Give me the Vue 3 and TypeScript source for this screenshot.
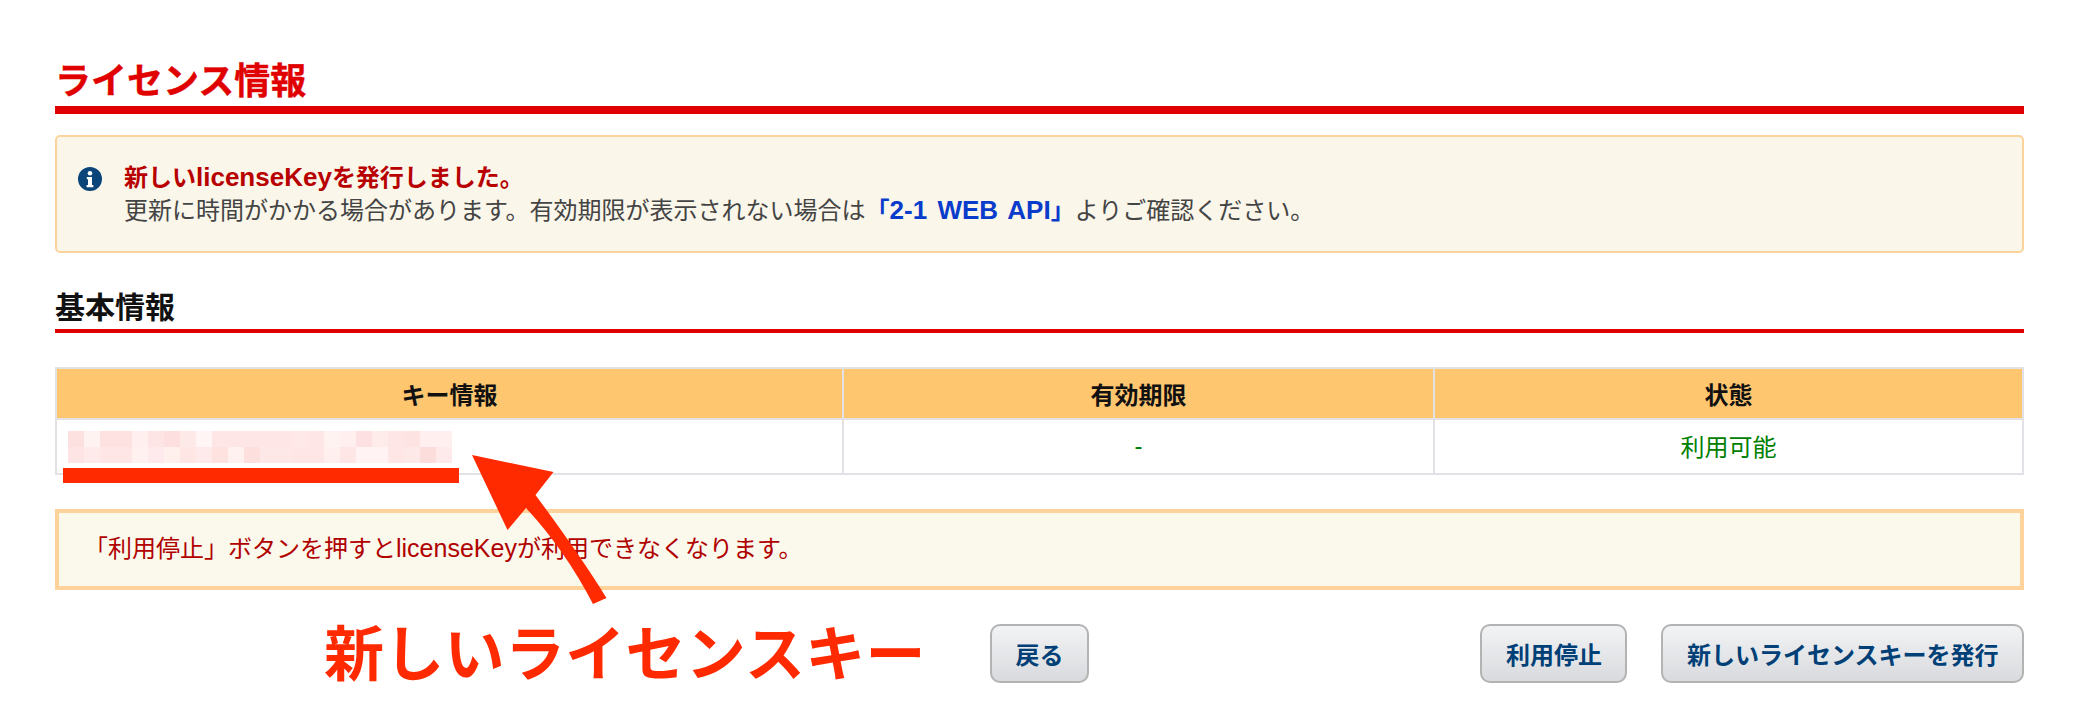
<script setup lang="ts">
const rows: string[][] = [
  ['fde0e0','fff3f1','fee2e2','fee2e2','fff0ef','fde5e5','fddfe0','fee9e9','fff5f4','fee6e6','fee6e6','fee6e6','fee6e6','fee6e6','fee8e8','fee6e6','fff3f1','ffefee','fde0e1','feecea','fee6e6','fee3e3','fff0ef','fff0ef'],
  ['fee4e4','feeaea','fee6e6','fee6e6','fff1f0','feeaec','fff0ee','fee6e5','feeaea','fee2e0','fff1ef','fddfdd','fee7e7','fee7e7','fee6e6','fee6e6','ffefee','fee6e6','fff4f3','fff4f3','fee6e6','fee9e9','fddcdc','feeaea'],
]
const cells = rows.flat().map((c) => '#' + c)
</script>

<template>
  <div class="page">
    <h1 class="title">ライセンス情報</h1>

    <div class="notice">
      <svg class="info" viewBox="0 0 24 24" aria-hidden="true">
        <circle cx="12" cy="12" r="12" fill="#0a4478" />
        <circle cx="12" cy="6.2" r="2.3" fill="#fff" />
        <path d="M8.8 10h5.2v8h1.4v2.2H8.6V18H10v-5.8H8.8z" fill="#fff" />
      </svg>
      <div class="notice-text">
        <div class="notice-head">新しい<span class="latin-bold">licenseKey</span>を発行しました。</div>
        <div>更新に時間がかかる場合があります。有効期限が表示されない場合は<a class="link">「<span class="latin-link">2-1 WEB API</span>」</a>よりご確認ください。</div>
      </div>
    </div>

    <h2 class="subtitle">基本情報</h2>

    <table class="info-table">
      <colgroup>
        <col class="col-a" />
        <col class="col-b" />
        <col />
      </colgroup>
      <thead>
        <tr>
          <th>キー情報</th>
          <th>有効期限</th>
          <th>状態</th>
        </tr>
      </thead>
      <tbody>
        <tr>
          <td class="key-cell">
            <div class="mosaic">
              <span v-for="(c, i) in cells" :key="i" :style="{ background: c }"></span>
            </div>
          </td>
          <td class="ok">-</td>
          <td class="ok">利用可能</td>
        </tr>
      </tbody>
    </table>

    <div class="warning">「利用停止」ボタンを押すと<span class="latin">licenseKey</span>が利用できなくなります。</div>

    <div class="actions">
      <div></div>
      <button class="btn" type="button">戻る</button>
      <div class="actions-right">
        <button class="btn" type="button">利用停止</button>
        <button class="btn" type="button">新しいライセンスキーを発行</button>
      </div>
    </div>

    <svg class="overlay" width="2074" height="714" viewBox="0 0 2074 714" aria-hidden="true">
      <rect x="63" y="468" width="396" height="15" fill="#ff2a00" />
      <path
        d="M472 455 L553.5 472 L535.5 495 Q580 555 606.5 598 L593 604 Q565 550 526 508 L507.5 530 Z"
        fill="#ff2a00"
      />
    </svg>
    <div class="callout">新しいライセンスキー</div>
  </div>
</template>

<style>
html,
body {
  margin: 0;
  background: #fff;
}
</style>

<style scoped>
.page {
  position: relative;
  box-sizing: border-box;
  width: 2074px;
  height: 714px;
  padding: 60px 50px 0 55px;
  font-family: "Liberation Sans", "Noto Sans CJK JP", sans-serif;
  font-size: 24px;
  color: #444;
  overflow: hidden;
}
.title {
  margin: 0;
  height: 46px;
  line-height: 44px;
  font-size: 36px;
  font-weight: 700;
  color: #e00000;
  border-bottom: 8px solid #e00000;
  -webkit-text-stroke: 0.4px #e00000;
}
.notice {
  box-sizing: border-box;
  display: flex;
  align-items: flex-start;
  gap: 22px;
  height: 118px;
  margin-top: 21px;
  padding: 24px 20px 0 21px;
  background: #faf6ea;
  border: 2px solid #fcd49b;
  border-radius: 5px;
}
.info {
  flex: none;
  width: 24px;
  height: 24px;
  margin-top: 6px;
}
.notice-text {
  line-height: 33px;
}
.notice-head {
  color: #b80000;
  font-weight: 700;
}
.latin-bold {
  font-size: 26px;
  line-height: 1;
}
.link {
  color: #0a3ccc;
  font-weight: 700;
}
.latin-link {
  font-size: 26px;
  line-height: 1;
  word-spacing: 3px;
}
.latin {
  font-size: 25px;
  line-height: 1;
}
.subtitle {
  margin: 37px 0 0;
  height: 39px;
  line-height: 36px;
  font-size: 30px;
  font-weight: 700;
  color: #111;
  border-bottom: 4px solid #e00000;
}
.info-table {
  width: 100%;
  margin-top: 34px;
  border-collapse: collapse;
  table-layout: fixed;
  border: 2px solid #e2e2e6;
}
.col-a {
  width: 787px;
}
.col-b {
  width: 591px;
}
.info-table th,
.info-table td {
  border: 2px solid #e2e2e6;
  padding: 0;
  text-align: center;
}
.info-table th {
  height: 49px;
  background: #ffc670;
  color: #111;
  font-size: 24px;
  font-weight: 700;
}
.info-table td {
  height: 53px;
  background: #fff;
}
.info-table td.ok {
  height: 51px;
  padding-bottom: 2px;
  color: #008000;
}
.info-table td.key-cell {
  text-align: left;
}
.mosaic {
  display: grid;
  grid-template-columns: repeat(24, 16px);
  grid-auto-rows: 16px;
  margin-left: 11px;
  width: 384px;
}
.warning {
  box-sizing: border-box;
  height: 81px;
  margin-top: 34px;
  padding-left: 25px;
  line-height: 71px;
  color: #b00000;
  background: #fbf8ec;
  border: 4px solid #fdd39b;
}
.actions {
  display: grid;
  grid-template-columns: 1fr auto 1fr;
  align-items: center;
  margin-top: 34px;
}
.actions-right {
  display: flex;
  justify-content: flex-end;
  gap: 34px;
}
.btn {
  box-sizing: border-box;
  height: 59px;
  padding: 0 23.5px;
  font-family: inherit;
  font-size: 24px;
  font-weight: 700;
  color: #004077;
  background: linear-gradient(#f2f3f5, #d8dadd);
  border: 2px solid #b3b3b3;
  border-radius: 10px;
}
.overlay {
  position: absolute;
  left: 0;
  top: 0;
}
.callout {
  position: absolute;
  left: 324px;
  top: 614px;
  font-size: 60px;
  letter-spacing: 0.3px;
  line-height: 84px;
  font-weight: 700;
  color: #ff2a00;
  white-space: nowrap;
}
</style>
